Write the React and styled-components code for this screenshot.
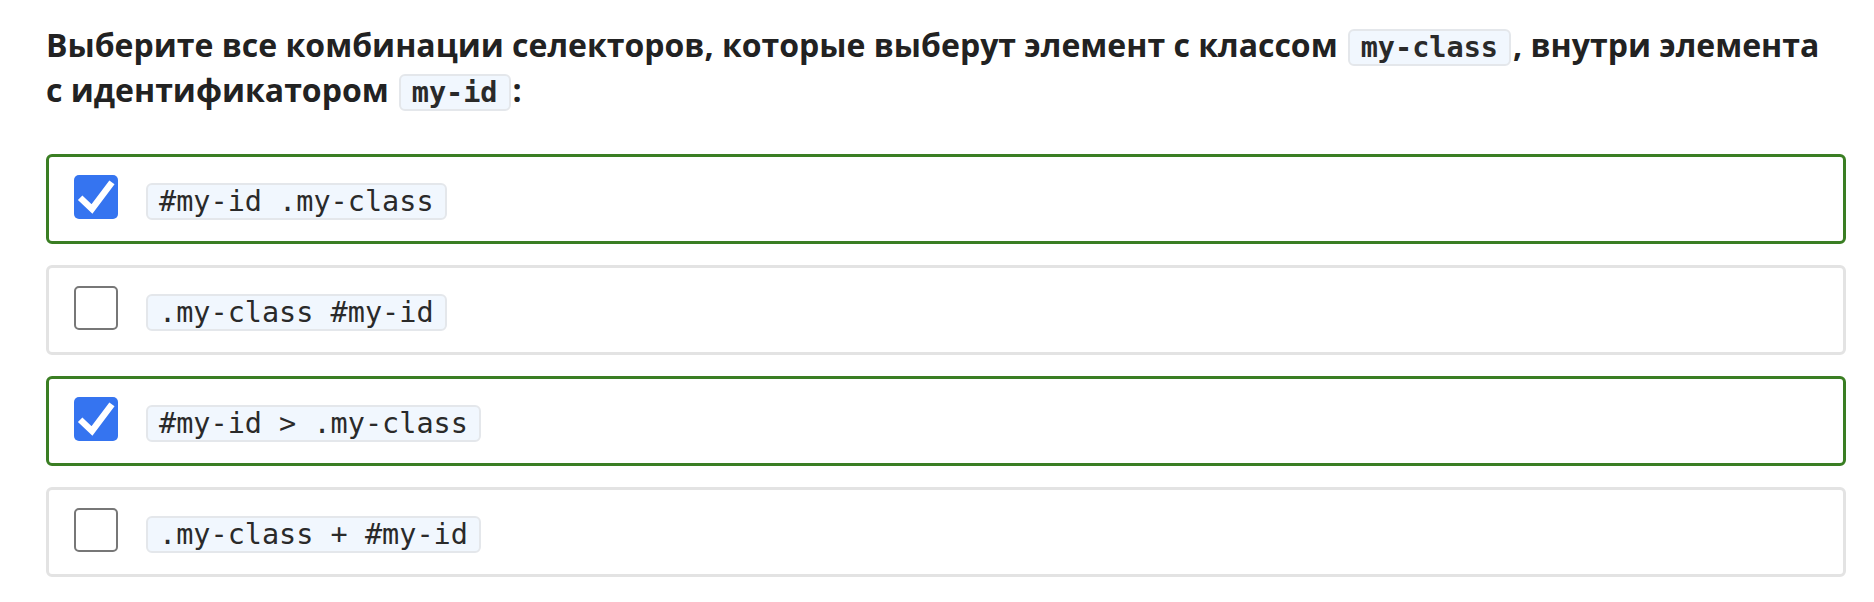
import React from "react";
import styled, { createGlobalStyle } from "styled-components";

const Global = createGlobalStyle`
  html, body { margin: 0; padding: 0; background: #ffffff; }
  body { font-family: "Open Sans", "Noto Sans", sans-serif; color: #222222; }
`;

const Page = styled.div`
  padding: 22px 28px 0 46px;
  width: 1800px;
`;

const Question = styled.h2`
  margin: 0 0 42px 0;
  padding-right: 16px;
  font-size: 32px;
  line-height: 45px;
  font-weight: 700;
  color: #222222;
`;

const Code = styled.code`
  display: inline-block;
  font-family: "DejaVu Sans Mono", "Liberation Mono", monospace;
  font-size: 28.5px;
  font-weight: ${(p) => (p.$bold ? 700 : 400)};
  line-height: 33px;
  padding: 0 11px;
  margin: ${(p) => (p.$inline ? "0 2px 0 10px" : "0")};
  background: #f1f7fe;
  border: 2px solid #e4e7eb;
  border-radius: 6px;
  color: #2a2a2a;
  vertical-align: ${(p) => (p.$inline ? "baseline" : "middle")};
`;

const Options = styled.div`
  display: flex;
  flex-direction: column;
  gap: 21px;
`;

const Option = styled.label`
  display: flex;
  align-items: center;
  gap: 28px;
  height: 90px;
  box-sizing: border-box;
  padding: 0 25px;
  border: 3px solid ${(p) => (p.$checked ? "#3a7e23" : "#e3e3e3")};
  border-radius: 6px;
  background: #ffffff;
`;

const Box = styled.span`
  flex: none;
  width: 44px;
  height: 44px;
  box-sizing: border-box;
  border-radius: 5px;
  background: ${(p) => (p.$checked ? "#3574f0" : "#ffffff")};
  border: ${(p) => (p.$checked ? "none" : "2px solid #777777")};
  display: flex;
  align-items: center;
  justify-content: center;
  margin-top: -4px;
`;

const Label = styled.span`
  display: flex;
  align-items: center;
  margin-top: 4px;
`;

const Check = () => (
  <svg width="44" height="44" viewBox="0 0 44 44">
    <path d="M8.5 25 L18 34 L36 10" fill="none" stroke="#ffffff" strokeWidth="6.5" strokeLinecap="square" strokeLinejoin="miter" />
  </svg>
);

const options = [
  { text: "#my-id .my-class", checked: true },
  { text: ".my-class #my-id", checked: false },
  { text: "#my-id > .my-class", checked: true },
  { text: ".my-class + #my-id", checked: false },
];

export default function App() {
  return (
    <Page>
      <Global />
      <Question>
        Выберите все комбинации селекторов, которые выберут элемент с классом
        <Code $inline $bold>my-class</Code>, внутри элемента с идентификатором
        <Code $inline $bold>my-id</Code>:
      </Question>
      <Options>
        {options.map((o) => (
          <Option key={o.text} $checked={o.checked}>
            <Box $checked={o.checked}>{o.checked && <Check />}</Box>
            <Label>
              <Code>{o.text}</Code>
            </Label>
          </Option>
        ))}
      </Options>
    </Page>
  );
}
